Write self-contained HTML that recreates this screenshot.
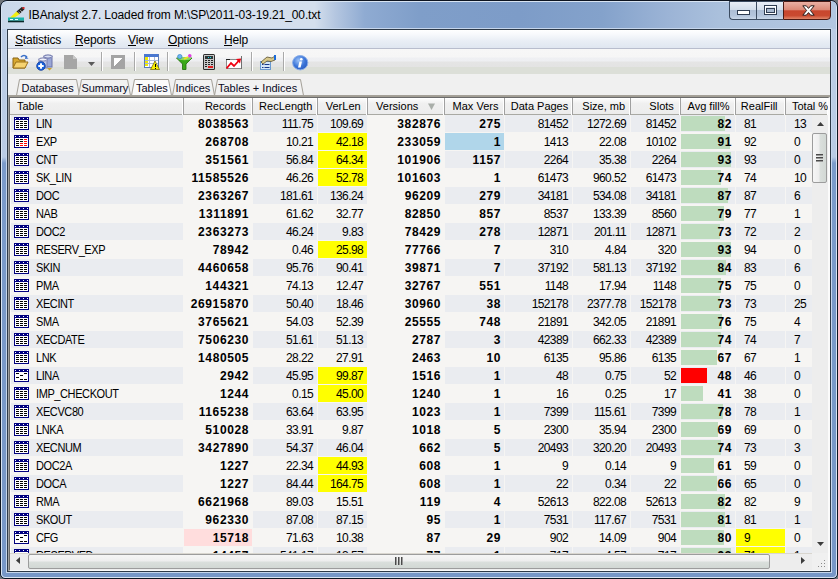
<!DOCTYPE html>
<html><head><meta charset="utf-8">
<style>
*{margin:0;padding:0;box-sizing:border-box}
html,body{width:838px;height:579px;overflow:hidden;background:#6f747a}
body{position:relative;font-family:"Liberation Sans",sans-serif;font-size:11px;color:#000}
.abs{position:absolute}
#frame{position:absolute;left:0;top:0;width:838px;height:579px;border:1px solid #0d1420;border-radius:7px 7px 5px 5px;background:#7c9cc9;overflow:hidden}
#fin{position:absolute;left:0;top:0;width:836px;height:577px;border:1px solid #d8e4f2;border-radius:6px 6px 4px 4px;background:linear-gradient(180deg,#bccde6 0,#b9cbe4 155px,#7b9bca 161px,#7797c7 100%)}
#title{position:absolute;left:0;top:0;width:834px;height:27px;background:linear-gradient(90deg,#c9d7ea 0%,#d6e0ee 8%,#d4dfed 37.5%,#b4c6e0 40%,#8fabd2 43.5%,#7f9ec9 50%,#7d9cc8 62%,#84a2cb 72%,#9cb4d6 80%,#aac0dc 86%,#b3c7e1 100%)}
#ttext{position:absolute;left:26.5px;top:6px;font-size:12px;color:#000;white-space:nowrap;letter-spacing:-0.1px}
#client{position:absolute;left:5px;top:27px;width:824px;height:543px;border:1px solid #2e3a48;box-shadow:0 0 0 1px #c6d6ec;background:#f0f0f0;overflow:hidden}
#menubar{position:absolute;left:0;top:0;width:822px;height:19px;background:linear-gradient(#ffffff 0%,#f7f9fc 25%,#e9eef5 60%,#dfe6f0 100%);border-bottom:1px solid #b8bdcd}
.mi{position:absolute;top:3px;font-size:12px;letter-spacing:-0.2px;white-space:nowrap}
.mi u{text-decoration:none;position:relative}
.mi u:after{content:"";position:absolute;left:0;right:0;top:12px;height:1px;background:#000}
#toolbar{position:absolute;left:0;top:19px;width:822px;height:24px;background:linear-gradient(#f7f7f7 0,#f6f6f6 8px,#eff0f3 9px,#eeeff2 12px,#e5e5e5 13px,#e3e3e3 18px)}
#tbline{position:absolute;left:0;top:18px;width:822px;height:8px;background:#dcdfd8}
.sep{position:absolute;top:3px;width:1px;height:19px;background:#a9a9a9}
.tb{position:absolute}
#tabs{position:absolute;left:0;top:44px;width:822px;height:22px;background:#f0f0f0}
#grid{position:absolute;left:0;top:66px;width:822px;height:475px;border-top:1px solid #a29e94;border-left:1px solid #a0a0a0;background:#f6f5f3;overflow:hidden}
#gin{position:absolute;left:0;top:0;width:821px;height:474px;border-top:1px solid #6b6b6b;border-left:1px solid #6b6b6b;border-right:2px solid #fbfbfb;border-bottom:1px solid #fbfbfb;overflow:hidden}
#hdr{position:absolute;left:0;top:0;width:819px;height:17px;background:linear-gradient(#fbfbfb,#f0f0f0 30%,#ececec);border-top:1px solid #fff;border-bottom:1px solid #a9a9a3}
.h{position:absolute;top:-1px;height:17px;border-right:1px solid #a0a0a0;box-shadow:inset -1px 0 0 #fff;line-height:17px;text-align:right;padding-right:3px;white-space:nowrap}
.hx{position:absolute;top:0;white-space:nowrap}.hc{transform:translateX(-50%)}
.sort{position:absolute;top:5px}
.row{position:absolute;left:0;width:802px;height:18px}
.c{position:absolute;top:0;height:18px;line-height:18px;font-size:12px;letter-spacing:-0.62px;text-align:right;padding-right:4px;white-space:nowrap;overflow:hidden}
.c.gr{background:linear-gradient(#eaecf0 17px,transparent 17px) 1px 0/calc(100% - 1px) 100% no-repeat}
.c.b{font-weight:bold;letter-spacing:0.6px;padding-right:3px}
.c.al{text-align:left;padding-left:9px}
.c span{position:relative}
.c.yl:before,.c.bl:before,.c.pk:before{content:"";position:absolute;left:1px;top:0;right:0;height:17px}
.c.yl:before{background:#ffff00}
.c.bl:before{background:#b0d6ea}
.c.pk:before{background:#ffdddd}
.bar{position:absolute;left:1px;top:1px;height:15px;background:#bedcbe}
.bar.red{background:#ff0000}
.ic{position:absolute;left:4px;top:2px}
.c .nm{position:absolute;left:26px;top:0;font-size:11px;letter-spacing:-0.4px;transform:scaleY(1.13);transform-origin:0 13px}
#vs{position:absolute;left:802px;top:17px;width:16px;height:438px;background:#ededed}
#hs{position:absolute;left:0;top:455px;width:802px;height:17px;background:#ededed;border-top:1px solid #d9d6cf}
#corner{position:absolute;left:802px;top:455px;width:16px;height:17px;background:#f0f0f0}
</style></head><body>
<div id="frame"><div id="fin">
 <div id="title">
  <svg class="abs" style="left:6px;top:5px" width="17" height="17" viewBox="8 7 17 17">
   <polygon points="9,18.5 17,11 20,14 13,18.5" fill="#f2ee10"/>
   <polygon points="16.5,11.5 22,6.8 24.5,9.2 19.5,14" fill="#262626"/>
   <path d="M18.5 11.8 L20.6 13.8 M20.3 10.2 L22.3 12.2" stroke="#d8d8d8" stroke-width="0.8"/>
   <rect x="22.5" y="7" width="2" height="2" fill="#d02828"/>
   <rect x="8" y="17.5" width="16" height="3.2" fill="#1ab4ac"/>
   <rect x="10" y="19" width="3" height="1" fill="#e8ffff"/><rect x="15" y="19" width="3" height="1" fill="#e8ffff"/>
   <rect x="8" y="20.7" width="16" height="1.6" fill="#0a2a2a"/>
  </svg>
  <div id="ttext">IBAnalyst 2.7. Loaded from M:\SP\2011-03-19.21_00.txt</div>
 </div>

 <div class="abs" style="left:727px;top:-1px;width:28px;height:19px;border:1px solid #3b4b60;border-right:none;border-radius:0 0 0 4px;background:linear-gradient(#e9eff7 0%,#d3deeb 45%,#aebfd6 50%,#b4c5dc 80%,#c9d7e8 100%)">
  <svg class="abs" style="left:7px;top:8px" width="13" height="5" shape-rendering="crispEdges"><rect x="0.5" y="0.5" width="12" height="4" fill="#fff" stroke="#2f3d52"/></svg>
 </div>
 <div class="abs" style="left:754px;top:-1px;width:27px;height:19px;border:1px solid #3b4b60;border-right:none;background:linear-gradient(#e9eff7 0%,#d3deeb 45%,#aebfd6 50%,#b4c5dc 80%,#c9d7e8 100%)">
  <svg class="abs" style="left:7px;top:3px" width="13" height="10" shape-rendering="crispEdges"><rect x="0.5" y="0.5" width="12" height="9" fill="none" stroke="#2f3d52"/><rect x="1.5" y="1.5" width="10" height="7" fill="none" stroke="#fff"/><rect x="2.5" y="3.5" width="8" height="4" fill="#a9b9cf" stroke="#2f3d52"/></svg>
 </div>
 <div class="abs" style="left:781px;top:-1px;width:48px;height:19px;border:1px solid #4a1a14;border-radius:0 0 4px 0;background:linear-gradient(#eab0a4 0%,#dc8a78 45%,#c8462e 52%,#c94a30 80%,#e0866a 100%)">
  <svg class="abs" style="left:18px;top:3px" width="13" height="11" viewBox="0 0 13 11"><path d="M0.8 0.8 L4.3 0.8 L6.5 3.4 L8.7 0.8 L12.2 0.8 L8.4 5.5 L12.2 10.2 L8.7 10.2 L6.5 7.6 L4.3 10.2 L0.8 10.2 L4.6 5.5 Z" fill="#fff" stroke="#2a1c1c" stroke-width="1" stroke-linejoin="round"/></svg>
 </div>

 <div id="client">
  <div id="menubar">
   <div class="mi" style="left:7px"><u>S</u>tatistics</div>
   <div class="mi" style="left:67px"><u>R</u>eports</div>
   <div class="mi" style="left:120px"><u>V</u>iew</div>
   <div class="mi" style="left:160px"><u>O</u>ptions</div>
   <div class="mi" style="left:216px"><u>H</u>elp</div>
  </div>
  <div id="toolbar"><div id="tbline"></div>
<svg class="tb" style="left:4px;top:5px" width="17" height="16" viewBox="0 0 17 16">
   <path d="M1 4 L1 14 L13 14 L13 6 L7 6 L6 4 Z" fill="#d8a830" stroke="#8a6414" stroke-width="1"/>
   <path d="M1 14 L4 8 L16 8 L13 14 Z" fill="#f6d370" stroke="#9a7018" stroke-width="1" stroke-linejoin="round"/>
   <path d="M9 3 Q12 0 15 3" fill="none" stroke="#3a70c8" stroke-width="1.6"/>
   <path d="M13.5 2 L16.5 4.5 L13 5 Z" fill="#3a70c8"/>
 </svg><svg class="tb" style="left:28px;top:5px" width="18" height="17" viewBox="0 0 18 17">
   <rect x="8" y="2" width="8" height="11" fill="#9aa6d6" stroke="#6a72a8"/>
   <ellipse cx="12" cy="2.5" rx="4" ry="1.6" fill="#d8def2" stroke="#6a72a8"/>
   <rect x="3" y="5" width="8" height="9" fill="#c0c6e6" stroke="#7a80b0"/>
   <ellipse cx="7" cy="5.5" rx="4" ry="1.6" fill="#eef0fa" stroke="#7a80b0"/>
   <path d="M11 14 L16 14 L13.5 16.5 Z" fill="#c8a030"/>
   <circle cx="5" cy="12" r="4.3" fill="#1a62dc" stroke="#0c3a9a" stroke-width="0.8"/>
   <rect x="2.3" y="11" width="5.4" height="2" fill="#fff"/><rect x="4" y="9.3" width="2" height="5.4" fill="#fff"/>
 </svg><svg class="tb" style="left:56px;top:6px" width="14" height="15" viewBox="0 0 14 15" shape-rendering="crispEdges">
   <path d="M0 0 L9 0 L13 4 L13 14 L0 14 Z" fill="#a6a6a6"/>
   <path d="M9 0 L9 4 L13 4" fill="#c8c8c8"/>
 </svg><svg class="tb" style="left:80px;top:13px" width="8" height="4" viewBox="0 0 8 4"><path d="M0 0 L7 0 L3.5 4 Z" fill="#5a5a5a"/></svg><div class="sep" style="left:93px"></div><div class="sep" style="left:94px;background:#fff"></div><svg class="tb" style="left:103px;top:6px" width="15" height="15" viewBox="0 0 15 15" shape-rendering="crispEdges">
   <rect x="0" y="0" width="14" height="14" fill="#a4a4a4"/>
   <path d="M3 3 L11 3 L3 11 Z" fill="#fff"/>
 </svg><div class="sep" style="left:126px"></div><div class="sep" style="left:127px;background:#fff"></div><svg class="tb" style="left:136px;top:5px" width="16" height="16" viewBox="0 0 16 16" shape-rendering="crispEdges">
   <rect x="0" y="0" width="14" height="13" fill="#fff" stroke="#5a7ab8"/>
   <rect x="0" y="0" width="14" height="3" fill="#4a78d0"/>
   <rect x="1" y="3" width="3" height="9" fill="#f0e800"/>
   <rect x="1" y="6" width="13" height="1" fill="#a8b8d8"/><rect x="1" y="9" width="13" height="1" fill="#a8b8d8"/>
   <rect x="5" y="3" width="1" height="10" fill="#a8b8d8"/><rect x="10" y="3" width="1" height="10" fill="#a8b8d8"/>
   <path d="M11 7 L15.5 15.5 L6.5 15.5 Z" fill="#f8f000" stroke="#6a6000" stroke-width="0.7" shape-rendering="auto"/>
   <rect x="10.5" y="10" width="1" height="3" fill="#000"/><rect x="10.5" y="14" width="1" height="1" fill="#000"/>
 </svg><div class="sep" style="left:159px"></div><div class="sep" style="left:160px;background:#fff"></div><svg class="tb" style="left:168px;top:5px" width="17" height="16" viewBox="0 0 17 16">
   <path d="M0.5 4 L16 4 L10 10 L10 15.5 L6.5 15.5 L6.5 10 Z" fill="#3aa818" stroke="#1e6a0a" stroke-width="0.8" stroke-linejoin="round"/>
   <ellipse cx="8.3" cy="4.6" rx="7" ry="1.6" fill="#8ad860"/>
   <circle cx="3.8" cy="2.6" r="2.2" fill="#6ab8f0" stroke="#2a78c0" stroke-width="0.6"/>
   <circle cx="13.8" cy="1.8" r="1.8" fill="#e040e0"/>
   <path d="M8 5 L12 3" stroke="#f0e020" stroke-width="1.8"/>
 </svg><svg class="tb" style="left:195px;top:5px" width="12" height="17" viewBox="0 0 12 17" shape-rendering="crispEdges">
   <rect x="0" y="0" width="12" height="16" rx="1.5" fill="#2e2e2e" shape-rendering="auto"/>
   <rect x="1" y="1" width="10" height="14" fill="#c8c8c8"/>
   <rect x="2" y="2" width="8" height="3" fill="#303838"/>
   <rect x="5" y="3" width="1" height="1" fill="#20e0f0"/><rect x="7" y="3" width="1" height="1" fill="#20e0f0"/>
   <rect x="2" y="6" width="2" height="1" fill="#222"/><rect x="5" y="6" width="2" height="1" fill="#222"/><rect x="8" y="6" width="2" height="1" fill="#222"/>
   <rect x="2" y="8" width="2" height="1" fill="#222"/><rect x="5" y="8" width="2" height="1" fill="#222"/><rect x="8" y="8" width="2" height="1" fill="#222"/>
   <rect x="2" y="10" width="2" height="1" fill="#222"/><rect x="5" y="10" width="2" height="1" fill="#222"/><rect x="8" y="10" width="2" height="1" fill="#222"/>
   <rect x="2" y="12" width="2" height="1" fill="#222"/><rect x="5" y="12" width="5" height="2" fill="#e02020"/>
 </svg><svg class="tb" style="left:218px;top:7px" width="17" height="14" viewBox="0 0 17 14" shape-rendering="crispEdges">
   <rect x="0.5" y="3.5" width="15" height="9" fill="#fff" stroke="#8a8a8a"/>
   <rect x="0" y="3" width="4" height="1" fill="#222"/><rect x="15" y="0" width="1" height="13" fill="#707070"/>
   <path d="M0.5 12.5 L5 7 L8 10 L13 4.5" fill="none" stroke="#f00010" stroke-width="1.8" shape-rendering="auto"/>
   <path d="M10 3 L15 2.5 L14 7.5 Z" fill="#f00010" shape-rendering="auto"/>
 </svg><div class="sep" style="left:243px"></div><div class="sep" style="left:244px;background:#fff"></div><svg class="tb" style="left:251px;top:6px" width="17" height="15" viewBox="0 0 17 15">
   <rect x="1.5" y="6.5" width="10" height="8" fill="#d4e6f8" stroke="#6a9ad0"/>
   <rect x="3" y="9" width="1.5" height="1" fill="#1a3a8a"/><rect x="5.5" y="9" width="5" height="1" fill="#1a3a8a"/>
   <rect x="3" y="12" width="1.5" height="1" fill="#1a3a8a"/><rect x="5.5" y="12" width="5" height="1" fill="#1a3a8a"/>
   <path d="M2 7 L8 2 L13 3 L16 1 L16 5 L12 6.5 L8 6 L4 9 Z" fill="#d8c88a" stroke="#5a5030" stroke-width="0.8"/>
   <rect x="15" y="0" width="2" height="5" fill="#1a6ad8"/>
 </svg><div class="sep" style="left:275px"></div><div class="sep" style="left:276px;background:#fff"></div><svg class="tb" style="left:284px;top:6px" width="17" height="16" viewBox="0 0 17 16">
   <defs><radialGradient id="ig" cx="0.4" cy="0.35" r="0.7"><stop offset="0" stop-color="#9ec4f8"/><stop offset="0.6" stop-color="#3a74d8"/><stop offset="1" stop-color="#2a5cc0"/></radialGradient></defs>
   <ellipse cx="8.2" cy="7.7" rx="7.6" ry="7.2" fill="url(#ig)" stroke="#8aaee8" stroke-width="1"/>
   <path d="M7.4 6.5 L10 6.5 L8.6 12.5 L6 12.5 Z" fill="#fff"/>
   <circle cx="9.3" cy="4.2" r="1.3" fill="#fff"/>
 </svg>
  </div>
  <div id="tabs">
<svg class="abs" style="left:0;top:0" width="822" height="22" viewBox="0 0 822 22">
<path d="M8.5 21.5 L11.5 5.5 L68.5 5.5 L71.5 21.5" fill="#f2f2f2" stroke="#a39f97" stroke-width="1"/>
<path d="M70.5 21.5 L73.5 5.5 L119.5 5.5 L122.5 21.5" fill="#f2f2f2" stroke="#a39f97" stroke-width="1"/>
<path d="M164.5 21.5 L167.5 5.5 L203.5 5.5 L206.5 21.5" fill="#f2f2f2" stroke="#a39f97" stroke-width="1"/>
<path d="M206.5 21.5 L209.5 5.5 L292.5 5.5 L295.5 21.5" fill="#f2f2f2" stroke="#a39f97" stroke-width="1"/>
<path d="M123.5 21.5 L126.5 5.5 L160.5 5.5 L163.5 21.5" fill="#fbfbfb" stroke="#a39f97" stroke-width="1"/>
<rect x="0" y="21" width="822" height="1" fill="#a5a199"/>
</svg>
<div class="abs" style="left:13.5px;top:8px;font-size:11px;letter-spacing:-0.05px;white-space:nowrap;color:#0a0a1e">Databases</div>
<div class="abs" style="left:73.5px;top:8px;font-size:11px;letter-spacing:-0.05px;white-space:nowrap;color:#0a0a1e">Summary</div>
<div class="abs" style="left:128.0px;top:8px;font-size:11px;letter-spacing:0;white-space:nowrap;color:#0a0a1e">Tables</div>
<div class="abs" style="left:167.5px;top:8px;font-size:11px;letter-spacing:0;white-space:nowrap;color:#0a0a1e">Indices</div>
<div class="abs" style="left:210.0px;top:8px;font-size:11px;letter-spacing:0;white-space:nowrap;color:#0a0a1e">Tables + Indices</div>
  </div>
  <div id="grid"><div id="gin">
   <div id="hdr">
<div class="h" style="left:1px;width:173px"><span class="hx" style="left:6px">Table</span></div>
<div class="h" style="left:174px;width:69px"><span class="hx hc" style="left:41.4px">Records</span></div>
<div class="h" style="left:243px;width:65px"><span class="hx hc" style="left:32.7px">RecLength</span></div>
<div class="h" style="left:308px;width:50px"><span class="hx hc" style="left:25.2px">VerLen</span></div>
<div class="h" style="left:358px;width:77px"><span class="hx hc" style="left:29.2px">Versions</span><svg class="sort" style="left:60px" width="7" height="7" viewBox="0 0 7 7"><path d="M0 0.5 L7 0.5 L3.5 7 Z" fill="#a9aea9"/></svg></div>
<div class="h" style="left:435px;width:60px"><span class="hx hc" style="left:30.5px">Max Vers</span></div>
<div class="h" style="left:495px;width:68px"><span class="hx hc" style="left:34.5px">Data Pages</span></div>
<div class="h" style="left:563px;width:58px"><span class="hx hc" style="left:30.7px">Size, mb</span></div>
<div class="h" style="left:621px;width:50px"><span class="hx hc" style="left:30.6px">Slots</span></div>
<div class="h" style="left:671px;width:55px"><span class="hx hc" style="left:27.5px">Avg fill%</span></div>
<div class="h" style="left:726px;width:50px"><span class="hx hc" style="left:23.2px">RealFill</span></div>
<div class="h" style="left:776px;width:43px"><span class="hx hc" style="left:24.0px">Total %</span></div>
   </div>
<div class="row" style="top:17px">
<div class="c gr" style="left:0px;width:173px"><svg class="ic" width="15" height="13" viewBox="0 0 15 13" shape-rendering="crispEdges"><rect width="15" height="13" fill="#000080"/><rect x="1" y="3" width="13" height="9" fill="#fff"/><rect x="1" y="1" width="1" height="1" fill="#fff"/><rect x="5" y="1" width="1" height="1" fill="#fff"/><rect x="9" y="1" width="1" height="1" fill="#fff"/><rect x="13" y="1" width="1" height="1" fill="#fff"/><rect x="2" y="4" width="3" height="1" fill="#000"/><rect x="6" y="4" width="3" height="1" fill="#000"/><rect x="10" y="4" width="3" height="1" fill="#000"/><rect x="2" y="6" width="3" height="1" fill="#000"/><rect x="6" y="6" width="3" height="1" fill="#000"/><rect x="10" y="6" width="3" height="1" fill="#000"/><rect x="2" y="8" width="3" height="1" fill="#000"/><rect x="6" y="8" width="3" height="1" fill="#000"/><rect x="10" y="8" width="3" height="1" fill="#000"/><rect x="2" y="10" width="3" height="1" fill="#000"/><rect x="6" y="10" width="3" height="1" fill="#000"/><rect x="10" y="10" width="3" height="1" fill="#000"/></svg><span class="nm">LIN</span></div>
<div class="c b" style="left:173px;width:69px"><span>8038563</span></div>
<div class="c gr" style="left:242px;width:65px"><span>111.75</span></div>
<div class="c gr" style="left:307px;width:50px"><span>109.69</span></div>
<div class="c b" style="left:357px;width:77px"><span>382876</span></div>
<div class="c gr b" style="left:434px;width:60px"><span>275</span></div>
<div class="c gr" style="left:494px;width:68px"><span>81452</span></div>
<div class="c gr" style="left:562px;width:58px"><span>1272.69</span></div>
<div class="c gr" style="left:620px;width:50px"><span>81452</span></div>
<div class="c gr b" style="left:670px;width:55px"><i class="bar" style="width:44px"></i><span>82</span></div>
<div class="c gr al" style="left:725px;width:50px"><span>81</span></div>
<div class="c gr al" style="left:775px;width:27px"><span>13</span></div>
</div>
<div class="row" style="top:35px">
<div class="c" style="left:0px;width:173px"><svg class="ic" width="15" height="13" viewBox="0 0 15 13" shape-rendering="crispEdges"><rect width="15" height="13" fill="#000080"/><rect x="1" y="3" width="13" height="9" fill="#fff"/><rect x="1" y="1" width="1" height="1" fill="#fff"/><rect x="5" y="1" width="1" height="1" fill="#fff"/><rect x="9" y="1" width="1" height="1" fill="#fff"/><rect x="13" y="1" width="1" height="1" fill="#fff"/><rect x="2" y="4" width="3" height="1" fill="#000"/><rect x="6" y="4" width="3" height="1" fill="#000"/><rect x="10" y="4" width="3" height="1" fill="#f00"/><rect x="2" y="6" width="3" height="1" fill="#000"/><rect x="6" y="6" width="3" height="1" fill="#000"/><rect x="10" y="6" width="3" height="1" fill="#f00"/><rect x="2" y="8" width="3" height="1" fill="#000"/><rect x="6" y="8" width="3" height="1" fill="#f00"/><rect x="10" y="8" width="3" height="1" fill="#f00"/><rect x="2" y="10" width="3" height="1" fill="#000"/><rect x="6" y="10" width="3" height="1" fill="#f00"/><rect x="10" y="10" width="3" height="1" fill="#f00"/></svg><span class="nm">EXP</span></div>
<div class="c b" style="left:173px;width:69px"><span>268708</span></div>
<div class="c" style="left:242px;width:65px"><span>10.21</span></div>
<div class="c yl" style="left:307px;width:50px"><span>42.18</span></div>
<div class="c b" style="left:357px;width:77px"><span>233059</span></div>
<div class="c b bl" style="left:434px;width:60px"><span>1</span></div>
<div class="c" style="left:494px;width:68px"><span>1413</span></div>
<div class="c" style="left:562px;width:58px"><span>22.08</span></div>
<div class="c" style="left:620px;width:50px"><span>10102</span></div>
<div class="c b" style="left:670px;width:55px"><i class="bar" style="width:49px"></i><span>91</span></div>
<div class="c al" style="left:725px;width:50px"><span>92</span></div>
<div class="c al" style="left:775px;width:27px"><span>0</span></div>
</div>
<div class="row" style="top:53px">
<div class="c gr" style="left:0px;width:173px"><svg class="ic" width="15" height="13" viewBox="0 0 15 13" shape-rendering="crispEdges"><rect width="15" height="13" fill="#000080"/><rect x="1" y="3" width="13" height="9" fill="#fff"/><rect x="1" y="1" width="1" height="1" fill="#fff"/><rect x="5" y="1" width="1" height="1" fill="#fff"/><rect x="9" y="1" width="1" height="1" fill="#fff"/><rect x="13" y="1" width="1" height="1" fill="#fff"/><rect x="2" y="4" width="3" height="1" fill="#000"/><rect x="6" y="4" width="3" height="1" fill="#000"/><rect x="10" y="4" width="3" height="1" fill="#000"/><rect x="2" y="6" width="3" height="1" fill="#000"/><rect x="6" y="6" width="3" height="1" fill="#000"/><rect x="10" y="6" width="3" height="1" fill="#000"/><rect x="2" y="8" width="3" height="1" fill="#000"/><rect x="6" y="8" width="3" height="1" fill="#000"/><rect x="10" y="8" width="3" height="1" fill="#000"/><rect x="2" y="10" width="3" height="1" fill="#000"/><rect x="6" y="10" width="3" height="1" fill="#000"/><rect x="10" y="10" width="3" height="1" fill="#000"/></svg><span class="nm">CNT</span></div>
<div class="c b" style="left:173px;width:69px"><span>351561</span></div>
<div class="c gr" style="left:242px;width:65px"><span>56.84</span></div>
<div class="c gr yl" style="left:307px;width:50px"><span>64.34</span></div>
<div class="c b" style="left:357px;width:77px"><span>101906</span></div>
<div class="c gr b" style="left:434px;width:60px"><span>1157</span></div>
<div class="c gr" style="left:494px;width:68px"><span>2264</span></div>
<div class="c gr" style="left:562px;width:58px"><span>35.38</span></div>
<div class="c gr" style="left:620px;width:50px"><span>2264</span></div>
<div class="c gr b" style="left:670px;width:55px"><i class="bar" style="width:50px"></i><span>93</span></div>
<div class="c gr al" style="left:725px;width:50px"><span>93</span></div>
<div class="c gr al" style="left:775px;width:27px"><span>0</span></div>
</div>
<div class="row" style="top:71px">
<div class="c" style="left:0px;width:173px"><svg class="ic" width="15" height="13" viewBox="0 0 15 13" shape-rendering="crispEdges"><rect width="15" height="13" fill="#000080"/><rect x="1" y="3" width="13" height="9" fill="#fff"/><rect x="1" y="1" width="1" height="1" fill="#fff"/><rect x="5" y="1" width="1" height="1" fill="#fff"/><rect x="9" y="1" width="1" height="1" fill="#fff"/><rect x="13" y="1" width="1" height="1" fill="#fff"/><rect x="2" y="4" width="3" height="1" fill="#000"/><rect x="6" y="4" width="3" height="1" fill="#000"/><rect x="10" y="4" width="3" height="1" fill="#000"/><rect x="2" y="6" width="3" height="1" fill="#000"/><rect x="6" y="6" width="3" height="1" fill="#000"/><rect x="10" y="6" width="3" height="1" fill="#000"/><rect x="2" y="8" width="3" height="1" fill="#000"/><rect x="6" y="8" width="3" height="1" fill="#000"/><rect x="10" y="8" width="3" height="1" fill="#000"/><rect x="2" y="10" width="3" height="1" fill="#000"/><rect x="6" y="10" width="3" height="1" fill="#000"/><rect x="10" y="10" width="3" height="1" fill="#000"/></svg><span class="nm">SK_LIN</span></div>
<div class="c b" style="left:173px;width:69px"><span>11585526</span></div>
<div class="c" style="left:242px;width:65px"><span>46.26</span></div>
<div class="c yl" style="left:307px;width:50px"><span>52.78</span></div>
<div class="c b" style="left:357px;width:77px"><span>101603</span></div>
<div class="c b" style="left:434px;width:60px"><span>1</span></div>
<div class="c" style="left:494px;width:68px"><span>61473</span></div>
<div class="c" style="left:562px;width:58px"><span>960.52</span></div>
<div class="c" style="left:620px;width:50px"><span>61473</span></div>
<div class="c b" style="left:670px;width:55px"><i class="bar" style="width:40px"></i><span>74</span></div>
<div class="c al" style="left:725px;width:50px"><span>74</span></div>
<div class="c al" style="left:775px;width:27px"><span>10</span></div>
</div>
<div class="row" style="top:89px">
<div class="c gr" style="left:0px;width:173px"><svg class="ic" width="15" height="13" viewBox="0 0 15 13" shape-rendering="crispEdges"><rect width="15" height="13" fill="#000080"/><rect x="1" y="3" width="13" height="9" fill="#fff"/><rect x="1" y="1" width="1" height="1" fill="#fff"/><rect x="5" y="1" width="1" height="1" fill="#fff"/><rect x="9" y="1" width="1" height="1" fill="#fff"/><rect x="13" y="1" width="1" height="1" fill="#fff"/><rect x="2" y="4" width="3" height="1" fill="#000"/><rect x="6" y="4" width="3" height="1" fill="#000"/><rect x="10" y="4" width="3" height="1" fill="#000"/><rect x="2" y="6" width="3" height="1" fill="#000"/><rect x="6" y="6" width="3" height="1" fill="#000"/><rect x="10" y="6" width="3" height="1" fill="#000"/><rect x="2" y="8" width="3" height="1" fill="#000"/><rect x="6" y="8" width="3" height="1" fill="#000"/><rect x="10" y="8" width="3" height="1" fill="#000"/><rect x="2" y="10" width="3" height="1" fill="#000"/><rect x="6" y="10" width="3" height="1" fill="#000"/><rect x="10" y="10" width="3" height="1" fill="#000"/></svg><span class="nm">DOC</span></div>
<div class="c b" style="left:173px;width:69px"><span>2363267</span></div>
<div class="c gr" style="left:242px;width:65px"><span>181.61</span></div>
<div class="c gr" style="left:307px;width:50px"><span>136.24</span></div>
<div class="c b" style="left:357px;width:77px"><span>96209</span></div>
<div class="c gr b" style="left:434px;width:60px"><span>279</span></div>
<div class="c gr" style="left:494px;width:68px"><span>34181</span></div>
<div class="c gr" style="left:562px;width:58px"><span>534.08</span></div>
<div class="c gr" style="left:620px;width:50px"><span>34181</span></div>
<div class="c gr b" style="left:670px;width:55px"><i class="bar" style="width:47px"></i><span>87</span></div>
<div class="c gr al" style="left:725px;width:50px"><span>87</span></div>
<div class="c gr al" style="left:775px;width:27px"><span>6</span></div>
</div>
<div class="row" style="top:107px">
<div class="c" style="left:0px;width:173px"><svg class="ic" width="15" height="13" viewBox="0 0 15 13" shape-rendering="crispEdges"><rect width="15" height="13" fill="#000080"/><rect x="1" y="3" width="13" height="9" fill="#fff"/><rect x="1" y="1" width="1" height="1" fill="#fff"/><rect x="5" y="1" width="1" height="1" fill="#fff"/><rect x="9" y="1" width="1" height="1" fill="#fff"/><rect x="13" y="1" width="1" height="1" fill="#fff"/><rect x="2" y="4" width="3" height="1" fill="#000"/><rect x="6" y="4" width="3" height="1" fill="#000"/><rect x="10" y="4" width="3" height="1" fill="#000"/><rect x="2" y="6" width="3" height="1" fill="#000"/><rect x="6" y="6" width="3" height="1" fill="#000"/><rect x="10" y="6" width="3" height="1" fill="#000"/><rect x="2" y="8" width="3" height="1" fill="#000"/><rect x="6" y="8" width="3" height="1" fill="#000"/><rect x="10" y="8" width="3" height="1" fill="#000"/><rect x="2" y="10" width="3" height="1" fill="#000"/><rect x="6" y="10" width="3" height="1" fill="#000"/><rect x="10" y="10" width="3" height="1" fill="#000"/></svg><span class="nm">NAB</span></div>
<div class="c b" style="left:173px;width:69px"><span>1311891</span></div>
<div class="c" style="left:242px;width:65px"><span>61.62</span></div>
<div class="c" style="left:307px;width:50px"><span>32.77</span></div>
<div class="c b" style="left:357px;width:77px"><span>82850</span></div>
<div class="c b" style="left:434px;width:60px"><span>857</span></div>
<div class="c" style="left:494px;width:68px"><span>8537</span></div>
<div class="c" style="left:562px;width:58px"><span>133.39</span></div>
<div class="c" style="left:620px;width:50px"><span>8560</span></div>
<div class="c b" style="left:670px;width:55px"><i class="bar" style="width:43px"></i><span>79</span></div>
<div class="c al" style="left:725px;width:50px"><span>77</span></div>
<div class="c al" style="left:775px;width:27px"><span>1</span></div>
</div>
<div class="row" style="top:125px">
<div class="c gr" style="left:0px;width:173px"><svg class="ic" width="15" height="13" viewBox="0 0 15 13" shape-rendering="crispEdges"><rect width="15" height="13" fill="#000080"/><rect x="1" y="3" width="13" height="9" fill="#fff"/><rect x="1" y="1" width="1" height="1" fill="#fff"/><rect x="5" y="1" width="1" height="1" fill="#fff"/><rect x="9" y="1" width="1" height="1" fill="#fff"/><rect x="13" y="1" width="1" height="1" fill="#fff"/><rect x="2" y="4" width="3" height="1" fill="#000"/><rect x="6" y="4" width="3" height="1" fill="#000"/><rect x="10" y="4" width="3" height="1" fill="#000"/><rect x="2" y="6" width="3" height="1" fill="#000"/><rect x="6" y="6" width="3" height="1" fill="#000"/><rect x="10" y="6" width="3" height="1" fill="#000"/><rect x="2" y="8" width="3" height="1" fill="#000"/><rect x="6" y="8" width="3" height="1" fill="#000"/><rect x="10" y="8" width="3" height="1" fill="#000"/><rect x="2" y="10" width="3" height="1" fill="#000"/><rect x="6" y="10" width="3" height="1" fill="#000"/><rect x="10" y="10" width="3" height="1" fill="#000"/></svg><span class="nm">DOC2</span></div>
<div class="c b" style="left:173px;width:69px"><span>2363273</span></div>
<div class="c gr" style="left:242px;width:65px"><span>46.24</span></div>
<div class="c gr" style="left:307px;width:50px"><span>9.83</span></div>
<div class="c b" style="left:357px;width:77px"><span>78429</span></div>
<div class="c gr b" style="left:434px;width:60px"><span>278</span></div>
<div class="c gr" style="left:494px;width:68px"><span>12871</span></div>
<div class="c gr" style="left:562px;width:58px"><span>201.11</span></div>
<div class="c gr" style="left:620px;width:50px"><span>12871</span></div>
<div class="c gr b" style="left:670px;width:55px"><i class="bar" style="width:39px"></i><span>73</span></div>
<div class="c gr al" style="left:725px;width:50px"><span>72</span></div>
<div class="c gr al" style="left:775px;width:27px"><span>2</span></div>
</div>
<div class="row" style="top:143px">
<div class="c" style="left:0px;width:173px"><svg class="ic" width="15" height="13" viewBox="0 0 15 13" shape-rendering="crispEdges"><rect width="15" height="13" fill="#000080"/><rect x="1" y="3" width="13" height="9" fill="#fff"/><rect x="1" y="1" width="1" height="1" fill="#fff"/><rect x="5" y="1" width="1" height="1" fill="#fff"/><rect x="9" y="1" width="1" height="1" fill="#fff"/><rect x="13" y="1" width="1" height="1" fill="#fff"/><rect x="2" y="4" width="3" height="1" fill="#000"/><rect x="6" y="4" width="3" height="1" fill="#000"/><rect x="10" y="4" width="3" height="1" fill="#000"/><rect x="2" y="6" width="3" height="1" fill="#000"/><rect x="6" y="6" width="3" height="1" fill="#000"/><rect x="10" y="6" width="3" height="1" fill="#000"/><rect x="2" y="8" width="3" height="1" fill="#000"/><rect x="6" y="8" width="3" height="1" fill="#000"/><rect x="10" y="8" width="3" height="1" fill="#000"/><rect x="2" y="10" width="3" height="1" fill="#000"/><rect x="6" y="10" width="3" height="1" fill="#000"/><rect x="10" y="10" width="3" height="1" fill="#000"/></svg><span class="nm">RESERV_EXP</span></div>
<div class="c b" style="left:173px;width:69px"><span>78942</span></div>
<div class="c" style="left:242px;width:65px"><span>0.46</span></div>
<div class="c yl" style="left:307px;width:50px"><span>25.98</span></div>
<div class="c b" style="left:357px;width:77px"><span>77766</span></div>
<div class="c b" style="left:434px;width:60px"><span>7</span></div>
<div class="c" style="left:494px;width:68px"><span>310</span></div>
<div class="c" style="left:562px;width:58px"><span>4.84</span></div>
<div class="c" style="left:620px;width:50px"><span>320</span></div>
<div class="c b" style="left:670px;width:55px"><i class="bar" style="width:50px"></i><span>93</span></div>
<div class="c al" style="left:725px;width:50px"><span>94</span></div>
<div class="c al" style="left:775px;width:27px"><span>0</span></div>
</div>
<div class="row" style="top:161px">
<div class="c gr" style="left:0px;width:173px"><svg class="ic" width="15" height="13" viewBox="0 0 15 13" shape-rendering="crispEdges"><rect width="15" height="13" fill="#000080"/><rect x="1" y="3" width="13" height="9" fill="#fff"/><rect x="1" y="1" width="1" height="1" fill="#fff"/><rect x="5" y="1" width="1" height="1" fill="#fff"/><rect x="9" y="1" width="1" height="1" fill="#fff"/><rect x="13" y="1" width="1" height="1" fill="#fff"/><rect x="2" y="4" width="3" height="1" fill="#000"/><rect x="6" y="4" width="3" height="1" fill="#000"/><rect x="10" y="4" width="3" height="1" fill="#000"/><rect x="2" y="6" width="3" height="1" fill="#000"/><rect x="6" y="6" width="3" height="1" fill="#000"/><rect x="10" y="6" width="3" height="1" fill="#000"/><rect x="2" y="8" width="3" height="1" fill="#000"/><rect x="6" y="8" width="3" height="1" fill="#000"/><rect x="10" y="8" width="3" height="1" fill="#000"/><rect x="2" y="10" width="3" height="1" fill="#000"/><rect x="6" y="10" width="3" height="1" fill="#000"/><rect x="10" y="10" width="3" height="1" fill="#000"/></svg><span class="nm">SKIN</span></div>
<div class="c b" style="left:173px;width:69px"><span>4460658</span></div>
<div class="c gr" style="left:242px;width:65px"><span>95.76</span></div>
<div class="c gr" style="left:307px;width:50px"><span>90.41</span></div>
<div class="c b" style="left:357px;width:77px"><span>39871</span></div>
<div class="c gr b" style="left:434px;width:60px"><span>7</span></div>
<div class="c gr" style="left:494px;width:68px"><span>37192</span></div>
<div class="c gr" style="left:562px;width:58px"><span>581.13</span></div>
<div class="c gr" style="left:620px;width:50px"><span>37192</span></div>
<div class="c gr b" style="left:670px;width:55px"><i class="bar" style="width:45px"></i><span>84</span></div>
<div class="c gr al" style="left:725px;width:50px"><span>83</span></div>
<div class="c gr al" style="left:775px;width:27px"><span>6</span></div>
</div>
<div class="row" style="top:179px">
<div class="c" style="left:0px;width:173px"><svg class="ic" width="15" height="13" viewBox="0 0 15 13" shape-rendering="crispEdges"><rect width="15" height="13" fill="#000080"/><rect x="1" y="3" width="13" height="9" fill="#fff"/><rect x="1" y="1" width="1" height="1" fill="#fff"/><rect x="5" y="1" width="1" height="1" fill="#fff"/><rect x="9" y="1" width="1" height="1" fill="#fff"/><rect x="13" y="1" width="1" height="1" fill="#fff"/><rect x="2" y="4" width="3" height="1" fill="#000"/><rect x="6" y="4" width="3" height="1" fill="#000"/><rect x="10" y="4" width="3" height="1" fill="#000"/><rect x="2" y="6" width="3" height="1" fill="#000"/><rect x="6" y="6" width="3" height="1" fill="#000"/><rect x="10" y="6" width="3" height="1" fill="#000"/><rect x="2" y="8" width="3" height="1" fill="#000"/><rect x="6" y="8" width="3" height="1" fill="#000"/><rect x="10" y="8" width="3" height="1" fill="#000"/><rect x="2" y="10" width="3" height="1" fill="#000"/><rect x="6" y="10" width="3" height="1" fill="#000"/><rect x="10" y="10" width="3" height="1" fill="#000"/></svg><span class="nm">PMA</span></div>
<div class="c b" style="left:173px;width:69px"><span>144321</span></div>
<div class="c" style="left:242px;width:65px"><span>74.13</span></div>
<div class="c" style="left:307px;width:50px"><span>12.47</span></div>
<div class="c b" style="left:357px;width:77px"><span>32767</span></div>
<div class="c b" style="left:434px;width:60px"><span>551</span></div>
<div class="c" style="left:494px;width:68px"><span>1148</span></div>
<div class="c" style="left:562px;width:58px"><span>17.94</span></div>
<div class="c" style="left:620px;width:50px"><span>1148</span></div>
<div class="c b" style="left:670px;width:55px"><i class="bar" style="width:40px"></i><span>75</span></div>
<div class="c al" style="left:725px;width:50px"><span>75</span></div>
<div class="c al" style="left:775px;width:27px"><span>0</span></div>
</div>
<div class="row" style="top:197px">
<div class="c gr" style="left:0px;width:173px"><svg class="ic" width="15" height="13" viewBox="0 0 15 13" shape-rendering="crispEdges"><rect width="15" height="13" fill="#000080"/><rect x="1" y="3" width="13" height="9" fill="#fff"/><rect x="1" y="1" width="1" height="1" fill="#fff"/><rect x="5" y="1" width="1" height="1" fill="#fff"/><rect x="9" y="1" width="1" height="1" fill="#fff"/><rect x="13" y="1" width="1" height="1" fill="#fff"/><rect x="2" y="4" width="3" height="1" fill="#000"/><rect x="6" y="4" width="3" height="1" fill="#000"/><rect x="10" y="4" width="3" height="1" fill="#000"/><rect x="2" y="6" width="3" height="1" fill="#000"/><rect x="6" y="6" width="3" height="1" fill="#000"/><rect x="10" y="6" width="3" height="1" fill="#000"/><rect x="2" y="8" width="3" height="1" fill="#000"/><rect x="6" y="8" width="3" height="1" fill="#000"/><rect x="10" y="8" width="3" height="1" fill="#000"/><rect x="2" y="10" width="3" height="1" fill="#000"/><rect x="6" y="10" width="3" height="1" fill="#000"/><rect x="10" y="10" width="3" height="1" fill="#000"/></svg><span class="nm">XECINT</span></div>
<div class="c b" style="left:173px;width:69px"><span>26915870</span></div>
<div class="c gr" style="left:242px;width:65px"><span>50.40</span></div>
<div class="c gr" style="left:307px;width:50px"><span>18.46</span></div>
<div class="c b" style="left:357px;width:77px"><span>30960</span></div>
<div class="c gr b" style="left:434px;width:60px"><span>38</span></div>
<div class="c gr" style="left:494px;width:68px"><span>152178</span></div>
<div class="c gr" style="left:562px;width:58px"><span>2377.78</span></div>
<div class="c gr" style="left:620px;width:50px"><span>152178</span></div>
<div class="c gr b" style="left:670px;width:55px"><i class="bar" style="width:39px"></i><span>73</span></div>
<div class="c gr al" style="left:725px;width:50px"><span>73</span></div>
<div class="c gr al" style="left:775px;width:27px"><span>25</span></div>
</div>
<div class="row" style="top:215px">
<div class="c" style="left:0px;width:173px"><svg class="ic" width="15" height="13" viewBox="0 0 15 13" shape-rendering="crispEdges"><rect width="15" height="13" fill="#000080"/><rect x="1" y="3" width="13" height="9" fill="#fff"/><rect x="1" y="1" width="1" height="1" fill="#fff"/><rect x="5" y="1" width="1" height="1" fill="#fff"/><rect x="9" y="1" width="1" height="1" fill="#fff"/><rect x="13" y="1" width="1" height="1" fill="#fff"/><rect x="2" y="4" width="3" height="1" fill="#000"/><rect x="6" y="4" width="3" height="1" fill="#000"/><rect x="10" y="4" width="3" height="1" fill="#000"/><rect x="2" y="6" width="3" height="1" fill="#000"/><rect x="6" y="6" width="3" height="1" fill="#000"/><rect x="10" y="6" width="3" height="1" fill="#000"/><rect x="2" y="8" width="3" height="1" fill="#000"/><rect x="6" y="8" width="3" height="1" fill="#000"/><rect x="10" y="8" width="3" height="1" fill="#000"/><rect x="2" y="10" width="3" height="1" fill="#000"/><rect x="6" y="10" width="3" height="1" fill="#000"/><rect x="10" y="10" width="3" height="1" fill="#000"/></svg><span class="nm">SMA</span></div>
<div class="c b" style="left:173px;width:69px"><span>3765621</span></div>
<div class="c" style="left:242px;width:65px"><span>54.03</span></div>
<div class="c" style="left:307px;width:50px"><span>52.39</span></div>
<div class="c b" style="left:357px;width:77px"><span>25555</span></div>
<div class="c b" style="left:434px;width:60px"><span>748</span></div>
<div class="c" style="left:494px;width:68px"><span>21891</span></div>
<div class="c" style="left:562px;width:58px"><span>342.05</span></div>
<div class="c" style="left:620px;width:50px"><span>21891</span></div>
<div class="c b" style="left:670px;width:55px"><i class="bar" style="width:41px"></i><span>76</span></div>
<div class="c al" style="left:725px;width:50px"><span>75</span></div>
<div class="c al" style="left:775px;width:27px"><span>4</span></div>
</div>
<div class="row" style="top:233px">
<div class="c gr" style="left:0px;width:173px"><svg class="ic" width="15" height="13" viewBox="0 0 15 13" shape-rendering="crispEdges"><rect width="15" height="13" fill="#000080"/><rect x="1" y="3" width="13" height="9" fill="#fff"/><rect x="1" y="1" width="1" height="1" fill="#fff"/><rect x="5" y="1" width="1" height="1" fill="#fff"/><rect x="9" y="1" width="1" height="1" fill="#fff"/><rect x="13" y="1" width="1" height="1" fill="#fff"/><rect x="2" y="4" width="3" height="1" fill="#000"/><rect x="6" y="4" width="3" height="1" fill="#000"/><rect x="10" y="4" width="3" height="1" fill="#000"/><rect x="2" y="6" width="3" height="1" fill="#000"/><rect x="6" y="6" width="3" height="1" fill="#000"/><rect x="10" y="6" width="3" height="1" fill="#000"/><rect x="2" y="8" width="3" height="1" fill="#000"/><rect x="6" y="8" width="3" height="1" fill="#000"/><rect x="10" y="8" width="3" height="1" fill="#000"/><rect x="2" y="10" width="3" height="1" fill="#000"/><rect x="6" y="10" width="3" height="1" fill="#000"/><rect x="10" y="10" width="3" height="1" fill="#000"/></svg><span class="nm">XECDATE</span></div>
<div class="c b" style="left:173px;width:69px"><span>7506230</span></div>
<div class="c gr" style="left:242px;width:65px"><span>51.61</span></div>
<div class="c gr" style="left:307px;width:50px"><span>51.13</span></div>
<div class="c b" style="left:357px;width:77px"><span>2787</span></div>
<div class="c gr b" style="left:434px;width:60px"><span>3</span></div>
<div class="c gr" style="left:494px;width:68px"><span>42389</span></div>
<div class="c gr" style="left:562px;width:58px"><span>662.33</span></div>
<div class="c gr" style="left:620px;width:50px"><span>42389</span></div>
<div class="c gr b" style="left:670px;width:55px"><i class="bar" style="width:40px"></i><span>74</span></div>
<div class="c gr al" style="left:725px;width:50px"><span>74</span></div>
<div class="c gr al" style="left:775px;width:27px"><span>7</span></div>
</div>
<div class="row" style="top:251px">
<div class="c" style="left:0px;width:173px"><svg class="ic" width="15" height="13" viewBox="0 0 15 13" shape-rendering="crispEdges"><rect width="15" height="13" fill="#000080"/><rect x="1" y="3" width="13" height="9" fill="#fff"/><rect x="1" y="1" width="1" height="1" fill="#fff"/><rect x="5" y="1" width="1" height="1" fill="#fff"/><rect x="9" y="1" width="1" height="1" fill="#fff"/><rect x="13" y="1" width="1" height="1" fill="#fff"/><rect x="2" y="4" width="3" height="1" fill="#000"/><rect x="6" y="4" width="3" height="1" fill="#000"/><rect x="10" y="4" width="3" height="1" fill="#000"/><rect x="2" y="6" width="3" height="1" fill="#000"/><rect x="6" y="6" width="3" height="1" fill="#000"/><rect x="10" y="6" width="3" height="1" fill="#000"/><rect x="2" y="8" width="3" height="1" fill="#000"/><rect x="6" y="8" width="3" height="1" fill="#000"/><rect x="10" y="8" width="3" height="1" fill="#000"/><rect x="2" y="10" width="3" height="1" fill="#000"/><rect x="6" y="10" width="3" height="1" fill="#000"/><rect x="10" y="10" width="3" height="1" fill="#000"/></svg><span class="nm">LNK</span></div>
<div class="c b" style="left:173px;width:69px"><span>1480505</span></div>
<div class="c" style="left:242px;width:65px"><span>28.22</span></div>
<div class="c" style="left:307px;width:50px"><span>27.91</span></div>
<div class="c b" style="left:357px;width:77px"><span>2463</span></div>
<div class="c b" style="left:434px;width:60px"><span>10</span></div>
<div class="c" style="left:494px;width:68px"><span>6135</span></div>
<div class="c" style="left:562px;width:58px"><span>95.86</span></div>
<div class="c" style="left:620px;width:50px"><span>6135</span></div>
<div class="c b" style="left:670px;width:55px"><i class="bar" style="width:36px"></i><span>67</span></div>
<div class="c al" style="left:725px;width:50px"><span>67</span></div>
<div class="c al" style="left:775px;width:27px"><span>1</span></div>
</div>
<div class="row" style="top:269px">
<div class="c gr" style="left:0px;width:173px"><svg class="ic" width="15" height="13" viewBox="0 0 15 13" shape-rendering="crispEdges"><rect width="15" height="13" fill="#000080"/><rect x="1" y="3" width="13" height="9" fill="#fff"/><rect x="1" y="1" width="1" height="1" fill="#fff"/><rect x="5" y="1" width="1" height="1" fill="#fff"/><rect x="9" y="1" width="1" height="1" fill="#fff"/><rect x="13" y="1" width="1" height="1" fill="#fff"/><rect x="2" y="4" width="3" height="1" fill="#000"/><rect x="10" y="4" width="3" height="1" fill="#000"/><rect x="6" y="6" width="3" height="1" fill="#000"/><rect x="2" y="8" width="3" height="1" fill="#000"/><rect x="6" y="10" width="3" height="1" fill="#000"/><rect x="10" y="10" width="3" height="1" fill="#000"/></svg><span class="nm">LINA</span></div>
<div class="c b" style="left:173px;width:69px"><span>2942</span></div>
<div class="c gr" style="left:242px;width:65px"><span>45.95</span></div>
<div class="c gr yl" style="left:307px;width:50px"><span>99.87</span></div>
<div class="c b" style="left:357px;width:77px"><span>1516</span></div>
<div class="c gr b" style="left:434px;width:60px"><span>1</span></div>
<div class="c gr" style="left:494px;width:68px"><span>48</span></div>
<div class="c gr" style="left:562px;width:58px"><span>0.75</span></div>
<div class="c gr" style="left:620px;width:50px"><span>52</span></div>
<div class="c gr b" style="left:670px;width:55px"><i class="bar red" style="width:26px"></i><span>48</span></div>
<div class="c gr al" style="left:725px;width:50px"><span>46</span></div>
<div class="c gr al" style="left:775px;width:27px"><span>0</span></div>
</div>
<div class="row" style="top:287px">
<div class="c" style="left:0px;width:173px"><svg class="ic" width="15" height="13" viewBox="0 0 15 13" shape-rendering="crispEdges"><rect width="15" height="13" fill="#000080"/><rect x="1" y="3" width="13" height="9" fill="#fff"/><rect x="1" y="1" width="1" height="1" fill="#fff"/><rect x="5" y="1" width="1" height="1" fill="#fff"/><rect x="9" y="1" width="1" height="1" fill="#fff"/><rect x="13" y="1" width="1" height="1" fill="#fff"/><rect x="2" y="4" width="3" height="1" fill="#000"/><rect x="6" y="4" width="3" height="1" fill="#000"/><rect x="10" y="4" width="3" height="1" fill="#000"/><rect x="2" y="6" width="3" height="1" fill="#000"/><rect x="6" y="6" width="3" height="1" fill="#000"/><rect x="10" y="6" width="3" height="1" fill="#000"/><rect x="2" y="8" width="3" height="1" fill="#000"/><rect x="6" y="8" width="3" height="1" fill="#000"/><rect x="10" y="8" width="3" height="1" fill="#000"/><rect x="2" y="10" width="3" height="1" fill="#000"/><rect x="6" y="10" width="3" height="1" fill="#000"/><rect x="10" y="10" width="3" height="1" fill="#000"/></svg><span class="nm">IMP_CHECKOUT</span></div>
<div class="c b" style="left:173px;width:69px"><span>1244</span></div>
<div class="c" style="left:242px;width:65px"><span>0.15</span></div>
<div class="c yl" style="left:307px;width:50px"><span>45.00</span></div>
<div class="c b" style="left:357px;width:77px"><span>1240</span></div>
<div class="c b" style="left:434px;width:60px"><span>1</span></div>
<div class="c" style="left:494px;width:68px"><span>16</span></div>
<div class="c" style="left:562px;width:58px"><span>0.25</span></div>
<div class="c" style="left:620px;width:50px"><span>17</span></div>
<div class="c b" style="left:670px;width:55px"><i class="bar" style="width:22px"></i><span>41</span></div>
<div class="c al" style="left:725px;width:50px"><span>38</span></div>
<div class="c al" style="left:775px;width:27px"><span>0</span></div>
</div>
<div class="row" style="top:305px">
<div class="c gr" style="left:0px;width:173px"><svg class="ic" width="15" height="13" viewBox="0 0 15 13" shape-rendering="crispEdges"><rect width="15" height="13" fill="#000080"/><rect x="1" y="3" width="13" height="9" fill="#fff"/><rect x="1" y="1" width="1" height="1" fill="#fff"/><rect x="5" y="1" width="1" height="1" fill="#fff"/><rect x="9" y="1" width="1" height="1" fill="#fff"/><rect x="13" y="1" width="1" height="1" fill="#fff"/><rect x="2" y="4" width="3" height="1" fill="#000"/><rect x="6" y="4" width="3" height="1" fill="#000"/><rect x="10" y="4" width="3" height="1" fill="#000"/><rect x="2" y="6" width="3" height="1" fill="#000"/><rect x="6" y="6" width="3" height="1" fill="#000"/><rect x="10" y="6" width="3" height="1" fill="#000"/><rect x="2" y="8" width="3" height="1" fill="#000"/><rect x="6" y="8" width="3" height="1" fill="#000"/><rect x="10" y="8" width="3" height="1" fill="#000"/><rect x="2" y="10" width="3" height="1" fill="#000"/><rect x="6" y="10" width="3" height="1" fill="#000"/><rect x="10" y="10" width="3" height="1" fill="#000"/></svg><span class="nm">XECVC80</span></div>
<div class="c b" style="left:173px;width:69px"><span>1165238</span></div>
<div class="c gr" style="left:242px;width:65px"><span>63.64</span></div>
<div class="c gr" style="left:307px;width:50px"><span>63.95</span></div>
<div class="c b" style="left:357px;width:77px"><span>1023</span></div>
<div class="c gr b" style="left:434px;width:60px"><span>1</span></div>
<div class="c gr" style="left:494px;width:68px"><span>7399</span></div>
<div class="c gr" style="left:562px;width:58px"><span>115.61</span></div>
<div class="c gr" style="left:620px;width:50px"><span>7399</span></div>
<div class="c gr b" style="left:670px;width:55px"><i class="bar" style="width:42px"></i><span>78</span></div>
<div class="c gr al" style="left:725px;width:50px"><span>78</span></div>
<div class="c gr al" style="left:775px;width:27px"><span>1</span></div>
</div>
<div class="row" style="top:323px">
<div class="c" style="left:0px;width:173px"><svg class="ic" width="15" height="13" viewBox="0 0 15 13" shape-rendering="crispEdges"><rect width="15" height="13" fill="#000080"/><rect x="1" y="3" width="13" height="9" fill="#fff"/><rect x="1" y="1" width="1" height="1" fill="#fff"/><rect x="5" y="1" width="1" height="1" fill="#fff"/><rect x="9" y="1" width="1" height="1" fill="#fff"/><rect x="13" y="1" width="1" height="1" fill="#fff"/><rect x="2" y="4" width="3" height="1" fill="#000"/><rect x="6" y="4" width="3" height="1" fill="#000"/><rect x="10" y="4" width="3" height="1" fill="#000"/><rect x="2" y="6" width="3" height="1" fill="#000"/><rect x="6" y="6" width="3" height="1" fill="#000"/><rect x="10" y="6" width="3" height="1" fill="#000"/><rect x="2" y="8" width="3" height="1" fill="#000"/><rect x="6" y="8" width="3" height="1" fill="#000"/><rect x="10" y="8" width="3" height="1" fill="#000"/><rect x="2" y="10" width="3" height="1" fill="#000"/><rect x="6" y="10" width="3" height="1" fill="#000"/><rect x="10" y="10" width="3" height="1" fill="#000"/></svg><span class="nm">LNKA</span></div>
<div class="c b" style="left:173px;width:69px"><span>510028</span></div>
<div class="c" style="left:242px;width:65px"><span>33.91</span></div>
<div class="c" style="left:307px;width:50px"><span>9.87</span></div>
<div class="c b" style="left:357px;width:77px"><span>1018</span></div>
<div class="c b" style="left:434px;width:60px"><span>5</span></div>
<div class="c" style="left:494px;width:68px"><span>2300</span></div>
<div class="c" style="left:562px;width:58px"><span>35.94</span></div>
<div class="c" style="left:620px;width:50px"><span>2300</span></div>
<div class="c b" style="left:670px;width:55px"><i class="bar" style="width:37px"></i><span>69</span></div>
<div class="c al" style="left:725px;width:50px"><span>69</span></div>
<div class="c al" style="left:775px;width:27px"><span>0</span></div>
</div>
<div class="row" style="top:341px">
<div class="c gr" style="left:0px;width:173px"><svg class="ic" width="15" height="13" viewBox="0 0 15 13" shape-rendering="crispEdges"><rect width="15" height="13" fill="#000080"/><rect x="1" y="3" width="13" height="9" fill="#fff"/><rect x="1" y="1" width="1" height="1" fill="#fff"/><rect x="5" y="1" width="1" height="1" fill="#fff"/><rect x="9" y="1" width="1" height="1" fill="#fff"/><rect x="13" y="1" width="1" height="1" fill="#fff"/><rect x="2" y="4" width="3" height="1" fill="#000"/><rect x="6" y="4" width="3" height="1" fill="#000"/><rect x="10" y="4" width="3" height="1" fill="#000"/><rect x="2" y="6" width="3" height="1" fill="#000"/><rect x="6" y="6" width="3" height="1" fill="#000"/><rect x="10" y="6" width="3" height="1" fill="#000"/><rect x="2" y="8" width="3" height="1" fill="#000"/><rect x="6" y="8" width="3" height="1" fill="#000"/><rect x="10" y="8" width="3" height="1" fill="#000"/><rect x="2" y="10" width="3" height="1" fill="#000"/><rect x="6" y="10" width="3" height="1" fill="#000"/><rect x="10" y="10" width="3" height="1" fill="#000"/></svg><span class="nm">XECNUM</span></div>
<div class="c b" style="left:173px;width:69px"><span>3427890</span></div>
<div class="c gr" style="left:242px;width:65px"><span>54.37</span></div>
<div class="c gr" style="left:307px;width:50px"><span>46.04</span></div>
<div class="c b" style="left:357px;width:77px"><span>662</span></div>
<div class="c gr b" style="left:434px;width:60px"><span>5</span></div>
<div class="c gr" style="left:494px;width:68px"><span>20493</span></div>
<div class="c gr" style="left:562px;width:58px"><span>320.20</span></div>
<div class="c gr" style="left:620px;width:50px"><span>20493</span></div>
<div class="c gr b" style="left:670px;width:55px"><i class="bar" style="width:40px"></i><span>74</span></div>
<div class="c gr al" style="left:725px;width:50px"><span>73</span></div>
<div class="c gr al" style="left:775px;width:27px"><span>3</span></div>
</div>
<div class="row" style="top:359px">
<div class="c" style="left:0px;width:173px"><svg class="ic" width="15" height="13" viewBox="0 0 15 13" shape-rendering="crispEdges"><rect width="15" height="13" fill="#000080"/><rect x="1" y="3" width="13" height="9" fill="#fff"/><rect x="1" y="1" width="1" height="1" fill="#fff"/><rect x="5" y="1" width="1" height="1" fill="#fff"/><rect x="9" y="1" width="1" height="1" fill="#fff"/><rect x="13" y="1" width="1" height="1" fill="#fff"/><rect x="2" y="4" width="3" height="1" fill="#000"/><rect x="6" y="4" width="3" height="1" fill="#000"/><rect x="10" y="4" width="3" height="1" fill="#000"/><rect x="2" y="6" width="3" height="1" fill="#000"/><rect x="6" y="6" width="3" height="1" fill="#000"/><rect x="10" y="6" width="3" height="1" fill="#000"/><rect x="2" y="8" width="3" height="1" fill="#000"/><rect x="6" y="8" width="3" height="1" fill="#000"/><rect x="10" y="8" width="3" height="1" fill="#000"/><rect x="2" y="10" width="3" height="1" fill="#000"/><rect x="6" y="10" width="3" height="1" fill="#000"/><rect x="10" y="10" width="3" height="1" fill="#000"/></svg><span class="nm">DOC2A</span></div>
<div class="c b" style="left:173px;width:69px"><span>1227</span></div>
<div class="c" style="left:242px;width:65px"><span>22.34</span></div>
<div class="c yl" style="left:307px;width:50px"><span>44.93</span></div>
<div class="c b" style="left:357px;width:77px"><span>608</span></div>
<div class="c b" style="left:434px;width:60px"><span>1</span></div>
<div class="c" style="left:494px;width:68px"><span>9</span></div>
<div class="c" style="left:562px;width:58px"><span>0.14</span></div>
<div class="c" style="left:620px;width:50px"><span>9</span></div>
<div class="c b" style="left:670px;width:55px"><i class="bar" style="width:33px"></i><span>61</span></div>
<div class="c al" style="left:725px;width:50px"><span>59</span></div>
<div class="c al" style="left:775px;width:27px"><span>0</span></div>
</div>
<div class="row" style="top:377px">
<div class="c gr" style="left:0px;width:173px"><svg class="ic" width="15" height="13" viewBox="0 0 15 13" shape-rendering="crispEdges"><rect width="15" height="13" fill="#000080"/><rect x="1" y="3" width="13" height="9" fill="#fff"/><rect x="1" y="1" width="1" height="1" fill="#fff"/><rect x="5" y="1" width="1" height="1" fill="#fff"/><rect x="9" y="1" width="1" height="1" fill="#fff"/><rect x="13" y="1" width="1" height="1" fill="#fff"/><rect x="2" y="4" width="3" height="1" fill="#000"/><rect x="6" y="4" width="3" height="1" fill="#000"/><rect x="10" y="4" width="3" height="1" fill="#000"/><rect x="2" y="6" width="3" height="1" fill="#000"/><rect x="6" y="6" width="3" height="1" fill="#000"/><rect x="10" y="6" width="3" height="1" fill="#000"/><rect x="2" y="8" width="3" height="1" fill="#000"/><rect x="6" y="8" width="3" height="1" fill="#000"/><rect x="10" y="8" width="3" height="1" fill="#000"/><rect x="2" y="10" width="3" height="1" fill="#000"/><rect x="6" y="10" width="3" height="1" fill="#000"/><rect x="10" y="10" width="3" height="1" fill="#000"/></svg><span class="nm">DOCA</span></div>
<div class="c b" style="left:173px;width:69px"><span>1227</span></div>
<div class="c gr" style="left:242px;width:65px"><span>84.44</span></div>
<div class="c gr yl" style="left:307px;width:50px"><span>164.75</span></div>
<div class="c b" style="left:357px;width:77px"><span>608</span></div>
<div class="c gr b" style="left:434px;width:60px"><span>1</span></div>
<div class="c gr" style="left:494px;width:68px"><span>22</span></div>
<div class="c gr" style="left:562px;width:58px"><span>0.34</span></div>
<div class="c gr" style="left:620px;width:50px"><span>22</span></div>
<div class="c gr b" style="left:670px;width:55px"><i class="bar" style="width:36px"></i><span>66</span></div>
<div class="c gr al" style="left:725px;width:50px"><span>65</span></div>
<div class="c gr al" style="left:775px;width:27px"><span>0</span></div>
</div>
<div class="row" style="top:395px">
<div class="c" style="left:0px;width:173px"><svg class="ic" width="15" height="13" viewBox="0 0 15 13" shape-rendering="crispEdges"><rect width="15" height="13" fill="#000080"/><rect x="1" y="3" width="13" height="9" fill="#fff"/><rect x="1" y="1" width="1" height="1" fill="#fff"/><rect x="5" y="1" width="1" height="1" fill="#fff"/><rect x="9" y="1" width="1" height="1" fill="#fff"/><rect x="13" y="1" width="1" height="1" fill="#fff"/><rect x="2" y="4" width="3" height="1" fill="#000"/><rect x="6" y="4" width="3" height="1" fill="#000"/><rect x="10" y="4" width="3" height="1" fill="#000"/><rect x="2" y="6" width="3" height="1" fill="#000"/><rect x="6" y="6" width="3" height="1" fill="#000"/><rect x="10" y="6" width="3" height="1" fill="#000"/><rect x="2" y="8" width="3" height="1" fill="#000"/><rect x="6" y="8" width="3" height="1" fill="#000"/><rect x="10" y="8" width="3" height="1" fill="#000"/><rect x="2" y="10" width="3" height="1" fill="#000"/><rect x="6" y="10" width="3" height="1" fill="#000"/><rect x="10" y="10" width="3" height="1" fill="#000"/></svg><span class="nm">RMA</span></div>
<div class="c b" style="left:173px;width:69px"><span>6621968</span></div>
<div class="c" style="left:242px;width:65px"><span>89.03</span></div>
<div class="c" style="left:307px;width:50px"><span>15.51</span></div>
<div class="c b" style="left:357px;width:77px"><span>119</span></div>
<div class="c b" style="left:434px;width:60px"><span>4</span></div>
<div class="c" style="left:494px;width:68px"><span>52613</span></div>
<div class="c" style="left:562px;width:58px"><span>822.08</span></div>
<div class="c" style="left:620px;width:50px"><span>52613</span></div>
<div class="c b" style="left:670px;width:55px"><i class="bar" style="width:44px"></i><span>82</span></div>
<div class="c al" style="left:725px;width:50px"><span>82</span></div>
<div class="c al" style="left:775px;width:27px"><span>9</span></div>
</div>
<div class="row" style="top:413px">
<div class="c gr" style="left:0px;width:173px"><svg class="ic" width="15" height="13" viewBox="0 0 15 13" shape-rendering="crispEdges"><rect width="15" height="13" fill="#000080"/><rect x="1" y="3" width="13" height="9" fill="#fff"/><rect x="1" y="1" width="1" height="1" fill="#fff"/><rect x="5" y="1" width="1" height="1" fill="#fff"/><rect x="9" y="1" width="1" height="1" fill="#fff"/><rect x="13" y="1" width="1" height="1" fill="#fff"/><rect x="2" y="4" width="3" height="1" fill="#000"/><rect x="6" y="4" width="3" height="1" fill="#000"/><rect x="10" y="4" width="3" height="1" fill="#000"/><rect x="2" y="6" width="3" height="1" fill="#000"/><rect x="6" y="6" width="3" height="1" fill="#000"/><rect x="10" y="6" width="3" height="1" fill="#000"/><rect x="2" y="8" width="3" height="1" fill="#000"/><rect x="6" y="8" width="3" height="1" fill="#000"/><rect x="10" y="8" width="3" height="1" fill="#000"/><rect x="2" y="10" width="3" height="1" fill="#000"/><rect x="6" y="10" width="3" height="1" fill="#000"/><rect x="10" y="10" width="3" height="1" fill="#000"/></svg><span class="nm">SKOUT</span></div>
<div class="c b" style="left:173px;width:69px"><span>962330</span></div>
<div class="c gr" style="left:242px;width:65px"><span>87.08</span></div>
<div class="c gr" style="left:307px;width:50px"><span>87.15</span></div>
<div class="c b" style="left:357px;width:77px"><span>95</span></div>
<div class="c gr b" style="left:434px;width:60px"><span>1</span></div>
<div class="c gr" style="left:494px;width:68px"><span>7531</span></div>
<div class="c gr" style="left:562px;width:58px"><span>117.67</span></div>
<div class="c gr" style="left:620px;width:50px"><span>7531</span></div>
<div class="c gr b" style="left:670px;width:55px"><i class="bar" style="width:44px"></i><span>81</span></div>
<div class="c gr al" style="left:725px;width:50px"><span>81</span></div>
<div class="c gr al" style="left:775px;width:27px"><span>1</span></div>
</div>
<div class="row" style="top:431px">
<div class="c" style="left:0px;width:173px"><svg class="ic" width="15" height="13" viewBox="0 0 15 13" shape-rendering="crispEdges"><rect width="15" height="13" fill="#000080"/><rect x="1" y="3" width="13" height="9" fill="#fff"/><rect x="1" y="1" width="1" height="1" fill="#fff"/><rect x="5" y="1" width="1" height="1" fill="#fff"/><rect x="9" y="1" width="1" height="1" fill="#fff"/><rect x="13" y="1" width="1" height="1" fill="#fff"/><rect x="2" y="4" width="3" height="1" fill="#000"/><rect x="10" y="4" width="3" height="1" fill="#000"/><rect x="6" y="6" width="3" height="1" fill="#000"/><rect x="2" y="8" width="3" height="1" fill="#000"/><rect x="6" y="10" width="3" height="1" fill="#000"/><rect x="10" y="10" width="3" height="1" fill="#000"/></svg><span class="nm">CFG</span></div>
<div class="c b pk" style="left:173px;width:69px"><span>15718</span></div>
<div class="c" style="left:242px;width:65px"><span>71.63</span></div>
<div class="c" style="left:307px;width:50px"><span>10.38</span></div>
<div class="c b" style="left:357px;width:77px"><span>87</span></div>
<div class="c b" style="left:434px;width:60px"><span>29</span></div>
<div class="c" style="left:494px;width:68px"><span>902</span></div>
<div class="c" style="left:562px;width:58px"><span>14.09</span></div>
<div class="c" style="left:620px;width:50px"><span>904</span></div>
<div class="c b" style="left:670px;width:55px"><i class="bar" style="width:43px"></i><span>80</span></div>
<div class="c yl al" style="left:725px;width:50px"><span>9</span></div>
<div class="c al" style="left:775px;width:27px"><span>0</span></div>
</div>
<div class="row" style="top:449px">
<div class="c gr" style="left:0px;width:173px"><svg class="ic" width="15" height="13" viewBox="0 0 15 13" shape-rendering="crispEdges"><rect width="15" height="13" fill="#000080"/><rect x="1" y="3" width="13" height="9" fill="#fff"/><rect x="1" y="1" width="1" height="1" fill="#fff"/><rect x="5" y="1" width="1" height="1" fill="#fff"/><rect x="9" y="1" width="1" height="1" fill="#fff"/><rect x="13" y="1" width="1" height="1" fill="#fff"/><rect x="2" y="4" width="3" height="1" fill="#000"/><rect x="6" y="4" width="3" height="1" fill="#000"/><rect x="10" y="4" width="3" height="1" fill="#000"/><rect x="2" y="6" width="3" height="1" fill="#000"/><rect x="6" y="6" width="3" height="1" fill="#000"/><rect x="10" y="6" width="3" height="1" fill="#000"/><rect x="2" y="8" width="3" height="1" fill="#000"/><rect x="6" y="8" width="3" height="1" fill="#000"/><rect x="10" y="8" width="3" height="1" fill="#000"/><rect x="2" y="10" width="3" height="1" fill="#000"/><rect x="6" y="10" width="3" height="1" fill="#000"/><rect x="10" y="10" width="3" height="1" fill="#000"/></svg><span class="nm">RESERVED</span></div>
<div class="c b" style="left:173px;width:69px"><span>14457</span></div>
<div class="c gr" style="left:242px;width:65px"><span>541.17</span></div>
<div class="c gr" style="left:307px;width:50px"><span>13.57</span></div>
<div class="c b" style="left:357px;width:77px"><span>77</span></div>
<div class="c gr b" style="left:434px;width:60px"><span>1</span></div>
<div class="c gr" style="left:494px;width:68px"><span>717</span></div>
<div class="c gr" style="left:562px;width:58px"><span>4.57</span></div>
<div class="c gr" style="left:620px;width:50px"><span>717</span></div>
<div class="c gr b" style="left:670px;width:55px"><i class="bar" style="width:50px"></i><span>93</span></div>
<div class="c gr yl al" style="left:725px;width:50px"><span>71</span></div>
<div class="c gr al" style="left:775px;width:27px"><span>1</span></div>
</div>
   <div class="abs" style="left:0;top:17px;width:1px;height:438px;background:#fafafa"></div>
   <div id="vs">
 <svg class="abs" style="left:5px;top:7px" width="7" height="4" viewBox="0 0 7 4"><path d="M3.5 0 L7 4 L0 4 Z" fill="#3c3c3c"/></svg>
 <div class="abs" style="left:0;top:18px;width:15px;height:50px;border:1px solid #9c9c9c;border-radius:2px;background:linear-gradient(90deg,#f6f6f6 0%,#eeeeee 45%,#dadfdc 55%,#d2d8d4 100%)"></div>
 <svg class="abs" style="left:4px;top:39px" width="7" height="8" shape-rendering="crispEdges"><rect x="0" y="0" width="7" height="1" fill="#4a4a4a"/><rect x="0" y="1" width="7" height="1" fill="#9a9a9a"/><rect x="0" y="3" width="7" height="1" fill="#4a4a4a"/><rect x="0" y="4" width="7" height="1" fill="#9a9a9a"/><rect x="0" y="6" width="7" height="1" fill="#4a4a4a"/><rect x="0" y="7" width="7" height="1" fill="#9a9a9a"/></svg>
 <svg class="abs" style="left:5px;top:427px" width="7" height="4" viewBox="0 0 7 4"><path d="M0 0 L7 0 L3.5 4 Z" fill="#3c3c3c"/></svg>
</div>
   <div id="hs">
 <svg class="abs" style="left:6px;top:3px" width="4" height="7" viewBox="0 0 4 7"><path d="M4 0 L4 7 L0 3.5 Z" fill="#3c3c3c"/></svg>
 <div class="abs" style="left:18px;top:0;width:742px;height:15px;border:1px solid #9c9c9c;border-radius:2px;background:linear-gradient(#f6f6f6 0%,#eeeeee 45%,#dadfdc 55%,#d2d8d4 100%)"></div>
 <svg class="abs" style="left:385px;top:3px" width="8" height="8" shape-rendering="crispEdges"><rect x="0" y="0" width="1" height="8" fill="#4a4a4a"/><rect x="1" y="0" width="1" height="8" fill="#9a9a9a"/><rect x="3" y="0" width="1" height="8" fill="#4a4a4a"/><rect x="4" y="0" width="1" height="8" fill="#9a9a9a"/><rect x="6" y="0" width="1" height="8" fill="#4a4a4a"/><rect x="7" y="0" width="1" height="8" fill="#9a9a9a"/></svg>
 <svg class="abs" style="left:791px;top:3px" width="4" height="7" viewBox="0 0 4 7"><path d="M0 0 L0 7 L4 3.5 Z" fill="#3c3c3c"/></svg>
</div>
   <div id="corner">
 <svg class="abs" style="left:6px;top:7px" width="8" height="8" shape-rendering="crispEdges">
  <rect x="6" y="0" width="1" height="1" fill="#8a8a8a"/>
  <rect x="3" y="3" width="1" height="1" fill="#8a8a8a"/><rect x="6" y="3" width="1" height="1" fill="#8a8a8a"/>
  <rect x="0" y="6" width="1" height="1" fill="#8a8a8a"/><rect x="3" y="6" width="1" height="1" fill="#8a8a8a"/><rect x="6" y="6" width="1" height="1" fill="#8a8a8a"/>
 </svg>
</div>
  </div></div>
 </div>
</div></div>
</body></html>
